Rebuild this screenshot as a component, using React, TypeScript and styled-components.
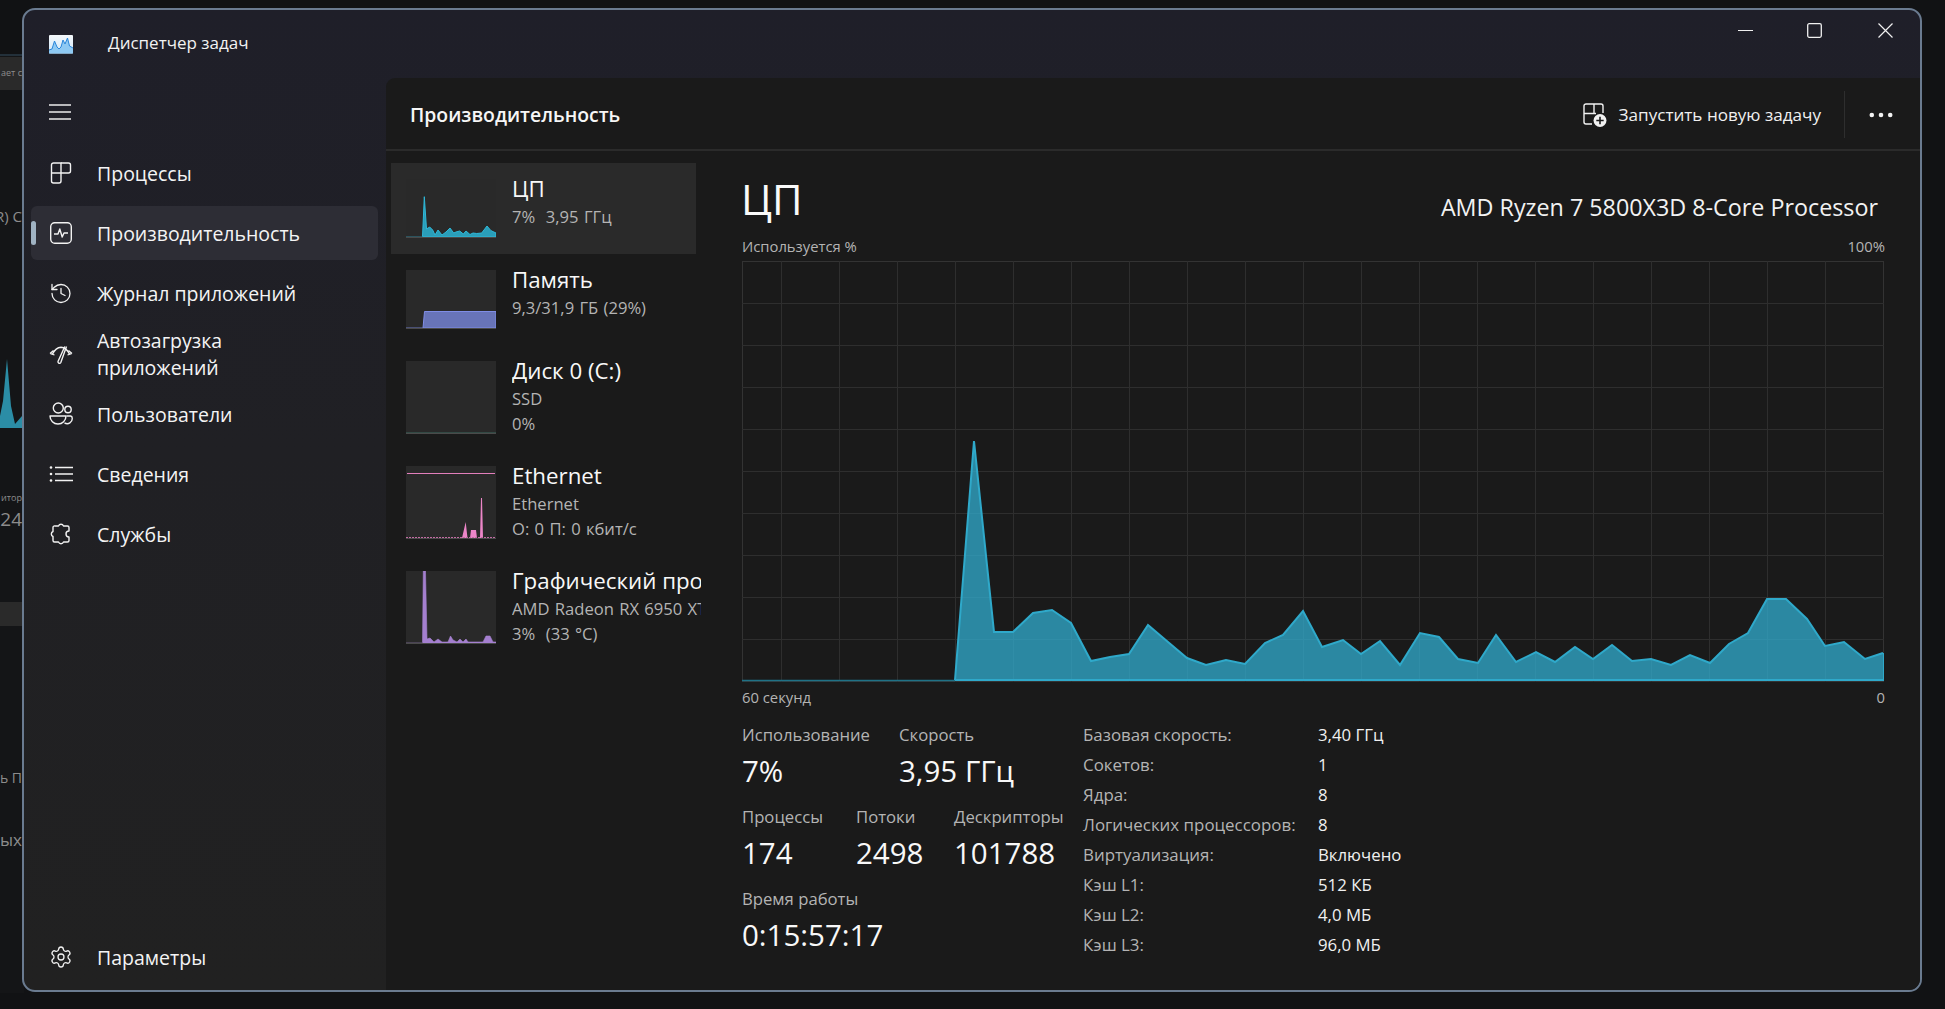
import React from "react";
import styled, { createGlobalStyle } from "styled-components";
import { History, Settings } from "lucide-react";

const GlobalStyle = createGlobalStyle`
  html, body {
    margin: 0;
    padding: 0;
    background: #111214;
    overflow: hidden;
  }
  * {
    box-sizing: border-box;
  }
`;

const Desktop = styled.div`
  position: relative;
  width: 1945px;
  height: 1009px;
  padding: 8px 23px 17px 22px;
  font-family: "Open Sans", "Noto Sans", sans-serif;
  color: #fff;
  background: #111214;
  overflow: hidden;
`;

/* the window lying behind the task manager, only a strip of it shows */
const BehindWindow = styled.div`
  position: absolute;
  left: 0;
  top: 54px;
  width: 24px;
  height: 939px;
  background: #141517;
  border-top: 2px solid #23303a;
  overflow: hidden;
`;

const BehindBar = styled.div`
  position: absolute;
  left: 0;
  top: ${(p: { $top: number; $height: number }) => p.$top}px;
  width: 24px;
  height: ${(p: { $top: number; $height: number }) => p.$height}px;
  background: #2a2a2a;
`;

const BehindText = styled.span<{ $top: number; $size: number }>`
  position: absolute;
  right: 2px;
  top: ${(p) => p.$top}px;
  font-size: ${(p) => p.$size}px;
  line-height: 1;
  color: #8c8c8c;
  white-space: nowrap;
`;

const BehindSpike = styled.svg`
  position: absolute;
  left: 0;
  top: 300px;
`;

const Window = styled.div`
  position: relative;
  display: grid;
  grid-template-columns: 362px 1fr;
  grid-template-rows: 68px 1fr;
  width: 1900px;
  height: 984px;
  border: 2px solid #6a7b90;
  border-radius: 13px;
  background: linear-gradient(180deg, #1f1f29 0%, #202024 45%, #212121 100%);
  overflow: hidden;
`;

const TitleBar = styled.div`
  grid-column: 1 / 3;
  display: flex;
  align-items: flex-start;
  justify-content: space-between;
`;

const AppTitle = styled.div`
  display: flex;
  align-items: center;
  height: 68px;
  padding: 0 0 0 25px;
  font-size: 17px;
  color: #f2f2f2;
`;

const AppName = styled.span`
  margin-left: 35px;
  margin-top: -3px;
`;

const WindowButtons = styled.div`
  display: flex;
  align-items: center;
  height: 40px;
  padding-right: 27px;
  gap: 54px;
`;

const CloseGlyph = styled.svg`
  margin-left: 2px;
`;

const Sidebar = styled.nav`
  display: flex;
  flex-direction: column;
  padding: 0 0 6px 7px;
  gap: 6px;
`;

const Burger = styled.div`
  display: flex;
  align-items: center;
  height: 61px;
  margin-bottom: 1px;
  padding: 7px 0 0 18px;
`;

const NavItem = styled.div<{ $active?: boolean; $height?: number; $bottom?: boolean }>`
  position: relative;
  display: flex;
  align-items: center;
  flex: none;
  width: 347px;
  height: ${(p) => p.$height ?? 54}px;
  margin-top: ${(p) => (p.$bottom ? "auto" : "0")};
  padding-left: 18px;
  gap: 24px;
  border-radius: 6px;
  font-size: 19.5px;
  line-height: 27px;
  color: #f4f4f4;
  background: ${(p) => (p.$active ? "#2d2d35" : "transparent")};
`;

const NavMark = styled.span`
  position: absolute;
  left: 0;
  top: 15px;
  width: 5px;
  height: 24px;
  border-radius: 3px;
  background: #9fb2c2;
`;

const NavIcon = styled.span`
  display: flex;
  align-items: center;
  justify-content: center;
  flex: none;
  width: 24px;
  height: 24px;
`;

const Main = styled.main`
  display: flex;
  flex-direction: column;
  min-height: 0;
  border-top-left-radius: 9px;
  background: #1a1a1a;
`;

const Header = styled.header`
  display: flex;
  align-items: center;
  flex: none;
  height: 73px;
  padding: 2px 27px 0 24px;
  border-bottom: 2px solid #2b2b2b;
`;

const HeaderTitle = styled.h1`
  flex: 1;
  margin: 0;
  font-size: 19.4px;
  font-weight: 600;
  color: #f6f6f6;
`;

const RunButton = styled.div`
  display: flex;
  align-items: center;
  gap: 12px;
  font-size: 17.1px;
  color: #f0f0f0;
`;

const HeaderDivider = styled.div`
  width: 1px;
  height: 47px;
  margin: 0 24px 0 23px;
  background: #2e2e2e;
`;

const Body = styled.div`
  display: flex;
  flex: 1;
  padding: 12px 0 0 5px;
  gap: 46px;
`;

const DeviceList = styled.div`
  display: flex;
  flex-direction: column;
  flex: none;
  width: 305px;
`;

const Device = styled.div<{ $selected?: boolean }>`
  display: flex;
  align-items: flex-start;
  gap: 16px;
  padding: 16px 0 16px 15px;
  background: ${(p) => (p.$selected ? "#2a2a2a" : "transparent")};
`;

const Thumb = styled.svg`
  display: block;
  flex: none;
  background: #292929;
`;

const DeviceText = styled.div`
  flex: none;
  width: 189px;
  margin: -6px 0 -10px;
  overflow: hidden;
  white-space: nowrap;
`;

const DeviceName = styled.div`
  font-size: 22.3px;
  line-height: 32px;
  color: #f8f8f8;
`;

const DeviceLine = styled.div<{ $first?: boolean }>`
  margin-top: ${(p) => (p.$first ? "0" : "1px")};
  font-size: 16.6px;
  line-height: 24px;
  color: #b4b4b4;
  word-spacing: 1px;
`;

const Detail = styled.section`
  display: flex;
  flex-direction: column;
  flex: none;
  width: 1143px;
`;

const DetailHead = styled.div`
  display: flex;
  align-items: flex-start;
  justify-content: space-between;
  height: 73px;
  padding: 10px 7px 0 0;
`;

const DetailTitle = styled.div`
  margin: -3px 0 0 -1px;
  font-size: 42px;
  line-height: 58px;
  color: #fafafa;
`;

const CpuName = styled.div`
  margin-top: 18px;
  font-size: 23.3px;
  line-height: 32px;
  color: #f2f2f2;
`;

const AxisRow = styled.div<{ $top?: number }>`
  display: flex;
  justify-content: space-between;
  height: 20px;
  margin-top: ${(p) => p.$top ?? 0}px;
  font-size: 14.8px;
  line-height: 20px;
  color: #b4b4b4;
`;

const Graph = styled.svg`
  display: block;
  margin-top: 5px;
`;

const Stats = styled.div`
  display: grid;
  grid-template-columns: 341px 235px 1fr;
  margin-top: 13px;
`;

const StatColumn = styled.div`
  display: flex;
  flex-direction: column;
  gap: 10px;
  margin-top: 3px;
`;

const StatRow = styled.div`
  display: flex;
`;

const Stat = styled.div<{ $width?: number }>`
  width: ${(p) => (p.$width ? `${p.$width}px` : "auto")};
  white-space: nowrap;
`;

const StatLabel = styled.div`
  font-size: 16.7px;
  line-height: 24px;
  color: #b4b4b4;
`;

const StatValue = styled.div`
  font-size: 29.5px;
  line-height: 48px;
  color: #f8f8f8;
`;

const Specs = styled.div`
  grid-column: 2 / 4;
  display: grid;
  grid-template-columns: 235px 1fr;
  grid-auto-rows: 30px;
`;

const SpecKey = styled.div`
  font-size: 16.9px;
  line-height: 30px;
  color: #b4b4b4;
  white-space: nowrap;
`;

const SpecValue = styled.div`
  font-size: 16.8px;
  line-height: 30px;
  color: #f0f0f0;
`;

type Point = [number, number];

// главный график, точки сняты в координатах экрана
const CPU_POINTS: Point[] = [
  [955, 680], [974, 441], [994, 632], [1013, 632], [1033, 613], [1052, 610], [1071, 623],
  [1091, 661], [1110, 657], [1129, 654], [1148, 625], [1168, 642], [1187, 658], [1206, 665],
  [1226, 660], [1245, 664], [1265, 643], [1283, 635], [1303, 611], [1322, 647], [1343, 640],
  [1361, 654], [1380, 641], [1400, 665], [1420, 633], [1439, 637], [1458, 659], [1478, 663],
  [1496, 635], [1516, 662], [1536, 652], [1555, 662], [1575, 647], [1593, 659], [1612, 645],
  [1632, 661], [1651, 659], [1671, 665], [1690, 655], [1710, 663], [1729, 644], [1748, 633],
  [1767, 599], [1786, 599], [1807, 619], [1825, 646], [1844, 642], [1865, 659], [1883, 653],
];

const GRAPH_W = 1143;
const GRAPH_H = 421;
const ORIGIN_X = 742;
const ORIGIN_Y = 261;

const toPoints = (pts: Point[]) => pts.map(([x, y]) => `${x},${y}`).join(" ");

const graphLine: Point[] = CPU_POINTS.map(([x, y]) => [x - ORIGIN_X, y - ORIGIN_Y]);
const graphBase = GRAPH_H - 1;

const vLines = Array.from({ length: 19 }, (_, i) => 39 + i * 58);
const hLines = Array.from({ length: 9 }, (_, i) => 42 + i * 42);

function CpuGraph() {
  return (
    <Graph width={GRAPH_W} height={GRAPH_H}>
      <rect x={0.5} y={0.5} width={GRAPH_W - 2} height={GRAPH_H - 1} fill="#1a1a1a" stroke="#333" />
      {vLines.map((x) => (
        <line key={x} x1={x + 0.5} x2={x + 0.5} y1={0} y2={GRAPH_H} stroke="#2e2e2e" />
      ))}
      {hLines.map((y) => (
        <line key={y} x1={0} x2={GRAPH_W - 1} y1={y + 0.5} y2={y + 0.5} stroke="#2e2e2e" />
      ))}
      <polygon
        points={toPoints([[213, graphBase - 1], ...graphLine, [1141, graphBase - 1]])}
        fill="#31a8c9"
        fillOpacity={0.78}
      />
      <line x1={0} x2={213} y1={graphBase - 0.5} y2={graphBase - 0.5} stroke="#1f7286" strokeWidth={1.5} />
      <polyline points={toPoints(graphLine)} fill="none" stroke="#2fa9ca" strokeWidth={2} />
      <line x1={213} x2={1141} y1={graphBase - 1} y2={graphBase - 1} stroke="#2fa9ca" strokeWidth={2} />
      <line x1={1141.5} x2={1141.5} y1={392} y2={graphBase} stroke="#2fa9ca" />
    </Graph>
  );
}

const CPU_THUMB: Point[] = [
  [16.5, 58], [18.3, 17.7], [20.5, 50], [23.7, 48], [26.7, 51], [29, 56], [32, 51],
  [36, 56], [40, 53], [44, 49], [47.7, 54], [50, 53], [53.7, 52], [57.3, 55], [60, 52], [64, 55.5],
  [67, 54], [70.7, 54.5], [75.7, 54], [81, 47], [85, 51.7], [90, 54], [90, 58],
];

const GPU_THUMB: Point[] = [
  [16.5, 72], [17.3, 0], [19.5, 0], [21, 68], [24, 67], [28, 71], [32, 68], [36, 71],
  [42, 71], [44.5, 65], [47, 69], [51, 71], [54, 68], [57, 71], [60, 68], [62, 71], [77, 71],
  [80, 65], [84, 65], [87, 71], [90, 71], [90, 72],
];

const NET_SPIKES: Point[] = [
  [56, 72], [59.7, 56], [61.5, 72], [64, 72], [65, 64], [70, 64], [71, 72], [72, 72], [74, 72],
  [75, 32], [76, 32], [77, 72],
];

function ThumbFrame({ h, children }: { h: number; children?: React.ReactNode }) {
  return (
    <Thumb width={90} height={h}>
      {children}
      <line x1={0} x2={90} y1={h - 0.5} y2={h - 0.5} stroke="#4a4a4a" />
    </Thumb>
  );
}

function CpuThumb() {
  return (
    <ThumbFrame h={59}>
      <polygon points={toPoints(CPU_THUMB)} fill="#2aabc9" fillOpacity={0.9} stroke="#2fb8d8" />
      <line x1={0} x2={17} y1={58} y2={58} stroke="#2f7f92" />
    </ThumbFrame>
  );
}

function MemoryThumb() {
  return (
    <ThumbFrame h={59}>
      <polygon points="17,58 18.5,41.5 90,41.5 90,58" fill="#6874b8" stroke="#7f8de6" />
      <line x1={0} x2={17} y1={58} y2={58} stroke="#6a76c0" />
    </ThumbFrame>
  );
}

function DiskThumb() {
  return (
    <ThumbFrame h={73}>
      <line x1={0} x2={90} y1={72} y2={72} stroke="#3d6a60" />
    </ThumbFrame>
  );
}

function NetThumb() {
  return (
    <ThumbFrame h={73}>
      <line x1={1} x2={89} y1={7.5} y2={7.5} stroke="#e37fbc" />
      <polygon points={toPoints(NET_SPIKES)} fill="#ec86c8" />
      <line x1={0} x2={90} y1={71.5} y2={71.5} stroke="#c16ba2" strokeDasharray="2 1" />
    </ThumbFrame>
  );
}

function GpuThumb() {
  return (
    <ThumbFrame h={73}>
      <polygon points={toPoints(GPU_THUMB)} fill="#a47fcf" stroke="#a884d4" strokeWidth={0.6} />
      <line x1={0} x2={17} y1={72} y2={72} stroke="#6c5f80" />
    </ThumbFrame>
  );
}

const ICON_STROKE = "#f2f2f2";

function Icon({ children, w = 24, h = 24 }: { children: React.ReactNode; w?: number; h?: number }) {
  return (
    <svg width={w} height={h} viewBox={`0 0 ${w} ${h}`} fill="none" stroke={ICON_STROKE} strokeWidth={1.4}>
      {children}
    </svg>
  );
}

const ProcessesIcon = () => (
  <Icon>
    <path d="M12 2 H4.5 A2 2 0 0 0 2.5 4 V20 A2 2 0 0 0 4.5 22 H10 A2 2 0 0 0 12 20 V2 Z" />
    <path d="M12 2 H19.5 A2 2 0 0 1 21.5 4 V10 A2 2 0 0 1 19.5 12 H2.5" />
  </Icon>
);

const PerfIcon = () => (
  <Icon>
    <rect x={1.7} y={1.7} width={20.6} height={20.6} rx={4} />
    <path d="M5 13 H9 L10.8 8 L13.2 16 L15 12 H19" strokeLinejoin="round" />
  </Icon>
);

const StartupIcon = () => (
  <Icon>
    <path d="M3.5 12 C5.5 8 8.5 5.5 12 5.3 C15 5.5 18.5 8 20.5 12" strokeWidth={1.5} />
    <path d="M1 11.5 L4.5 8.5 M5.5 13 L1.5 11.7 M23 11.5 L19.5 8.5 M18.5 13 L22.5 11.7" strokeWidth={1.3} />
    <path d="M17.5 4.5 L11.8 20.5 A1.5 1.5 0 0 1 9 19.5 L15.8 4.5" strokeWidth={1.4} strokeLinejoin="round" />
  </Icon>
);

const UsersIcon = () => (
  <Icon>
    <circle cx={9.3} cy={6} r={5} />
    <circle cx={19} cy={7.5} r={3.2} />
    <path d="M1 14 H17 A8 8 0 0 1 1 14 Z" strokeLinejoin="round" />
    <path d="M17.5 14 H21.5 A2 2 0 0 1 23.2 16 A5 5 0 0 1 15.5 20.8" />
  </Icon>
);

const ListIcon = () => (
  <Icon>
    <circle cx={2} cy={5.5} r={1.3} fill={ICON_STROKE} stroke="none" />
    <circle cx={2} cy={12} r={1.3} fill={ICON_STROKE} stroke="none" />
    <circle cx={2} cy={18.5} r={1.3} fill={ICON_STROKE} stroke="none" />
    <path d="M6 5.5 H24 M6 12 H24 M6 18.5 H24" />
  </Icon>
);

const ServicesIcon = () => (
  <Icon>
    <path
      d="M6 4 H9.5 A2.7 2.7 0 0 1 14.5 4 H18.5 A1.5 1.5 0 0 1 20 5.5 V9 A3 3 0 0 0 20 15 V18.5 A1.5 1.5 0 0 1 18.5 20 H14.5 A2.7 2.7 0 0 1 9.5 20 H5.5 A1.5 1.5 0 0 1 4 18.5 V14.5 A2.7 2.7 0 0 1 4 9.5 V5.5 A1.5 1.5 0 0 1 6 4 Z"
      strokeLinejoin="round"
    />
  </Icon>
);

const AppIcon = () => (
  <svg width={24} height={19} viewBox="0 0 24 19">
    <defs>
      <linearGradient id="appIconBg" x1="0" y1="0" x2="0" y2="1">
        <stop offset="0" stopColor="#f4f8fb" />
        <stop offset="1" stopColor="#cfe6f7" />
      </linearGradient>
    </defs>
    <rect x={0} y={0} width={24} height={18.5} rx={1} fill="url(#appIconBg)" />
    <path d="M0 15 L3 14 L5.5 6 L8 12 L10 14 L12 12 L14 5 L16 9 L18.5 3 L20.5 11 L24 13 V18.5 H0 Z" fill="#8ec9f3" />
    <path d="M0 15 L3 14 L5.5 6 L8 12 L10 14 L12 12 L14 5 L16 9 L18.5 3 L20.5 11 L24 13" fill="none" stroke="#2a86da" strokeWidth={1} />
  </svg>
);

const NewTaskIcon = () => (
  <svg width={24} height={24} viewBox="0 0 24 24" fill="none" stroke="#f2f2f2" strokeWidth={1.4}>
    <path d="M11 1 H3 A2 2 0 0 0 1 3 V19 A2 2 0 0 0 3 21 H9" />
    <path d="M11 1 V10.5 M11 1 H18 A2 2 0 0 1 20 3 V10 M1 10.5 H13" />
    <circle cx={17} cy={17.5} r={6.5} fill="#f2f2f2" stroke="none" />
    <path d="M17 13.8 V21.2 M13.3 17.5 H20.7" stroke="#1a1a1a" strokeWidth={1.6} />
  </svg>
);

const MoreIcon = () => (
  <svg width={24} height={6} viewBox="0 0 24 6" fill="#f2f2f2">
    <circle cx={2.8} cy={3} r={2.3} />
    <circle cx={12} cy={3} r={2.3} />
    <circle cx={21.2} cy={3} r={2.3} />
  </svg>
);

const SPECS = [
  ["Базовая скорость:", "3,40 ГГц"],
  ["Сокетов:", "1"],
  ["Ядра:", "8"],
  ["Логических процессоров:", "8"],
  ["Виртуализация:", "Включено"],
  ["Кэш L1:", "512 КБ"],
  ["Кэш L2:", "4,0 МБ"],
  ["Кэш L3:", "96,0 МБ"],
];

export default function App() {
  return (
    <Desktop>
      <GlobalStyle />
      <BehindWindow>
        <BehindBar $top={1} $height={33} />
        <BehindText $top={12} $size={9}>ает с</BehindText>
        <BehindText $top={153} $size={15}>(R) C</BehindText>
        <BehindSpike width={24} height={75}>
          <polygon points="0,60 3,45 7,3 11,50 15,68 22,60 22,72 0,72" fill="#2b8da6" />
        </BehindSpike>
        <BehindText $top={437} $size={9}>итор</BehindText>
        <BehindText $top={454} $size={19}>24</BehindText>
        <BehindBar $top={546} $height={24} />
        <BehindText $top={715} $size={14}>ь П</BehindText>
        <BehindText $top={775} $size={17}>ых</BehindText>
      </BehindWindow>
      <Window>
        <TitleBar>
          <AppTitle>
            <AppIcon />
            <AppName>Диспетчер задач</AppName>
          </AppTitle>
          <WindowButtons>
            <svg width={15} height={15} viewBox="0 0 15 15" stroke="#f0f0f0" strokeWidth={1.2}>
              <line x1={0} x2={15} y1={7.5} y2={7.5} />
            </svg>
            <svg width={15} height={15} viewBox="0 0 15 15" fill="none" stroke="#f0f0f0" strokeWidth={1.3}>
              <rect x={0.7} y={0.7} width={13.6} height={13.6} rx={1.5} />
            </svg>
            <CloseGlyph width={15} height={15} viewBox="0 0 15 15" stroke="#f0f0f0" strokeWidth={1.2}>
              <path d="M0.5 0.5 L14.5 14.5 M14.5 0.5 L0.5 14.5" />
            </CloseGlyph>
          </WindowButtons>
        </TitleBar>
        <Sidebar>
          <Burger>
            <svg width={22} height={16} viewBox="0 0 22 16" stroke="#ececec" strokeWidth={1.3}>
              <path d="M0 1 H22 M0 8 H22 M0 15 H22" />
            </svg>
          </Burger>
          <NavItem>
            <NavIcon><ProcessesIcon /></NavIcon>Процессы
          </NavItem>
          <NavItem $active>
            <NavMark />
            <NavIcon><PerfIcon /></NavIcon>Производительность
          </NavItem>
          <NavItem>
            <NavIcon><History size={27} strokeWidth={1.3} color={ICON_STROKE} /></NavIcon>Журнал приложений
          </NavItem>
          <NavItem $height={55}>
            <NavIcon><StartupIcon /></NavIcon>
            <span>Автозагрузка<br />приложений</span>
          </NavItem>
          <NavItem>
            <NavIcon><UsersIcon /></NavIcon>Пользователи
          </NavItem>
          <NavItem>
            <NavIcon><ListIcon /></NavIcon>Сведения
          </NavItem>
          <NavItem>
            <NavIcon><ServicesIcon /></NavIcon>Службы
          </NavItem>
          <NavItem $bottom>
            <NavIcon><Settings size={24} strokeWidth={1.3} color={ICON_STROKE} /></NavIcon>Параметры
          </NavItem>
        </Sidebar>
        <Main>
          <Header>
            <HeaderTitle>Производительность</HeaderTitle>
            <RunButton>
              <NewTaskIcon />
              Запустить новую задачу
            </RunButton>
            <HeaderDivider />
            <MoreIcon />
          </Header>
          <Body>
            <DeviceList>
              <Device $selected>
                <CpuThumb />
                <DeviceText>
                  <DeviceName>ЦП</DeviceName>
                  <DeviceLine $first>7%&nbsp; 3,95 ГГц</DeviceLine>
                </DeviceText>
              </Device>
              <Device>
                <MemoryThumb />
                <DeviceText>
                  <DeviceName>Память</DeviceName>
                  <DeviceLine $first>9,3/31,9 ГБ (29%)</DeviceLine>
                </DeviceText>
              </Device>
              <Device>
                <DiskThumb />
                <DeviceText>
                  <DeviceName>Диск 0 (C:)</DeviceName>
                  <DeviceLine $first>SSD</DeviceLine>
                  <DeviceLine>0%</DeviceLine>
                </DeviceText>
              </Device>
              <Device>
                <NetThumb />
                <DeviceText>
                  <DeviceName>Ethernet</DeviceName>
                  <DeviceLine $first>Ethernet</DeviceLine>
                  <DeviceLine>О: 0 П: 0 кбит/с</DeviceLine>
                </DeviceText>
              </Device>
              <Device>
                <GpuThumb />
                <DeviceText>
                  <DeviceName>Графический процессор 0</DeviceName>
                  <DeviceLine $first>AMD Radeon RX 6950 XT</DeviceLine>
                  <DeviceLine>3%&nbsp; (33 °C)</DeviceLine>
                </DeviceText>
              </Device>
            </DeviceList>
            <Detail>
              <DetailHead>
                <DetailTitle>ЦП</DetailTitle>
                <CpuName>AMD Ryzen 7 5800X3D 8-Core Processor</CpuName>
              </DetailHead>
              <AxisRow>
                <span>Используется %</span>
                <span>100%</span>
              </AxisRow>
              <CpuGraph />
              <AxisRow $top={5}>
                <span>60 секунд</span>
                <span>0</span>
              </AxisRow>
              <Stats>
                <StatColumn>
                  <StatRow>
                    <Stat $width={157}>
                      <StatLabel>Использование</StatLabel>
                      <StatValue>7%</StatValue>
                    </Stat>
                    <Stat>
                      <StatLabel>Скорость</StatLabel>
                      <StatValue>3,95 ГГц</StatValue>
                    </Stat>
                  </StatRow>
                  <StatRow>
                    <Stat $width={114}>
                      <StatLabel>Процессы</StatLabel>
                      <StatValue>174</StatValue>
                    </Stat>
                    <Stat $width={98}>
                      <StatLabel>Потоки</StatLabel>
                      <StatValue>2498</StatValue>
                    </Stat>
                    <Stat>
                      <StatLabel>Дескрипторы</StatLabel>
                      <StatValue>101788</StatValue>
                    </Stat>
                  </StatRow>
                  <StatRow>
                    <Stat>
                      <StatLabel>Время работы</StatLabel>
                      <StatValue>0:15:57:17</StatValue>
                    </Stat>
                  </StatRow>
                </StatColumn>
                <Specs>
                  {SPECS.map(([key, value]) => (
                    <React.Fragment key={key}>
                      <SpecKey>{key}</SpecKey>
                      <SpecValue>{value}</SpecValue>
                    </React.Fragment>
                  ))}
                </Specs>
              </Stats>
            </Detail>
          </Body>
        </Main>
      </Window>
    </Desktop>
  );
}
